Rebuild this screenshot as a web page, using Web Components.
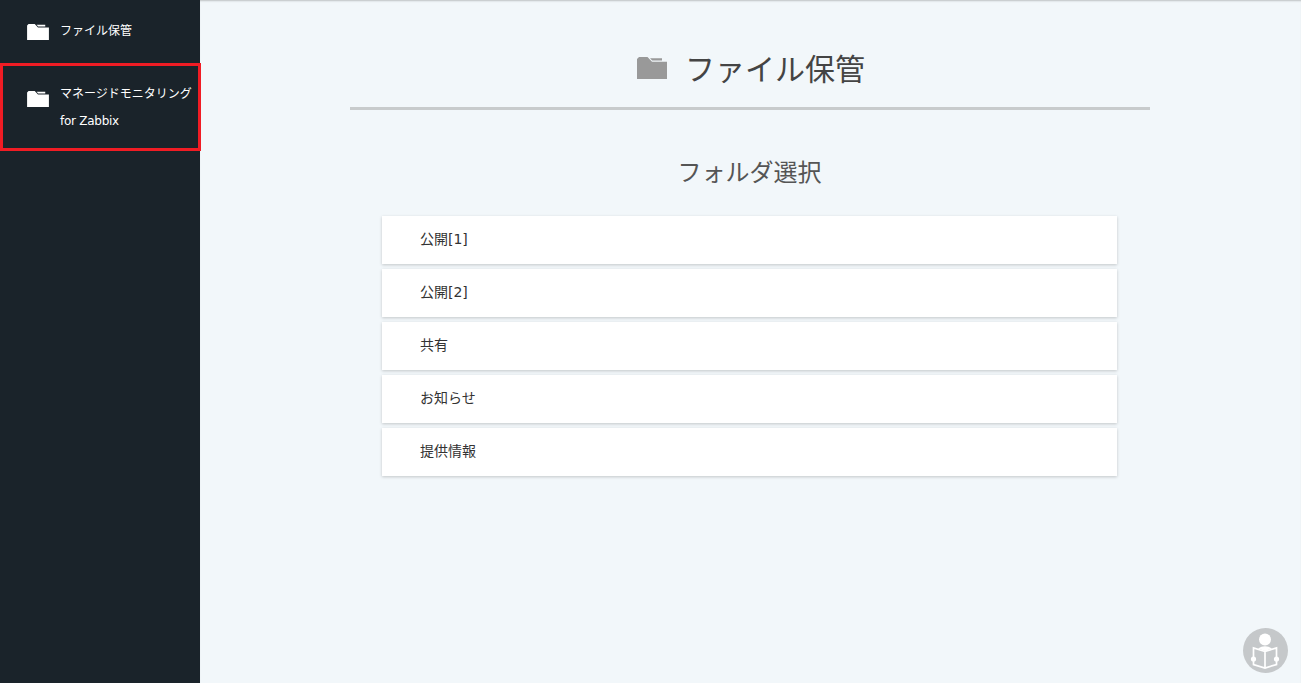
<!DOCTYPE html>
<html lang="ja">
<head>
<meta charset="utf-8">
<title>ファイル保管</title>
<style>
    html, body { margin: 0; height: 100%; overflow: hidden; }
    body { font-family: "DejaVu Sans", "Noto Sans CJK JP", sans-serif; }
</style>
</head>
<body>
<app-shell>
    <side-nav slot="nav">
        <nav-item>ファイル保管</nav-item>
        <nav-item outlined>マネージドモニタリング<br><span style="letter-spacing:-.26px">for Zabbix</span></nav-item>
    </side-nav>
    <page-title>ファイル保管</page-title>
    <folder-list heading="フォルダ選択">
        <folder-row>公開[1]</folder-row>
        <folder-row>公開[2]</folder-row>
        <folder-row>共有</folder-row>
        <folder-row>お知らせ</folder-row>
        <folder-row>提供情報</folder-row>
    </folder-list>
    <help-button></help-button>
</app-shell>

<script>
(function () {
    'use strict';

    const FOLDER = `<svg viewBox="0 0 30 22" width="100%" height="100%" style="display:block" aria-hidden="true">
        <path fill="currentColor" d="M0 22V2L2 0h8.5l4.5 4.7h15V22z"/>
        <path fill="currentColor" d="M13 1.2h12v2.4H15.2z"/>
    </svg>`;

    customElements.define('app-shell', class extends HTMLElement {
        constructor() {
            super();
            this.attachShadow({ mode: 'open' }).innerHTML = `
                <style>
                    :host {
                        display: grid;
                        grid-template-columns: 200px 1fr;
                        height: 683px;
                        background: #f2f7fa;
                        position: relative;
                    }
                    main {
                        display: flex;
                        flex-direction: column;
                        align-items: center;
                        padding-right: 1px;
                        box-shadow: inset 0 2px 2px -1px rgba(0,0,0,.22);
                    }
                </style>
                <slot name="nav"></slot>
                <main><slot></slot></main>
            `;
        }
    });

    customElements.define('side-nav', class extends HTMLElement {
        constructor() {
            super();
            this.attachShadow({ mode: 'open' }).innerHTML = `
                <style>
                    :host {
                        display: flex;
                        flex-direction: column;
                        background: #1a232a;
                        height: 100%;
                    }
                </style>
                <slot></slot>
            `;
        }
    });

    customElements.define('nav-item', class extends HTMLElement {
        constructor() {
            super();
            this.attachShadow({ mode: 'open' }).innerHTML = `
                <style>
                    :host {
                        display: flex;
                        box-sizing: border-box;
                        height: 63px;
                        padding: 17px 0 0 27px;
                        color: #fff;
                        font-size: 12px;
                        line-height: 27px;
                    }
                    :host([outlined]) {
                        width: 201px;
                        height: 88px;
                        border: 3px solid #f01c24;
                        padding: 13px 0 0 24px;
                        position: relative;
                        z-index: 1;
                    }
                    .icon { width: 22px; height: 16px; margin: 7px 11px 0 0; flex: none; }
                    :host([outlined]) .icon { margin-top: 12px; }
                    .label { white-space: nowrap; margin-top: 1px; }
                    :host([outlined]) .label { margin-top: 2px; }
                </style>
                <span class="icon">${FOLDER}</span>
                <span class="label"><slot></slot></span>
            `;
        }
    });

    customElements.define('page-title', class extends HTMLElement {
        constructor() {
            super();
            this.attachShadow({ mode: 'open' }).innerHTML = `
                <style>
                    :host {
                        display: flex;
                        justify-content: center;
                        align-items: center;
                        box-sizing: border-box;
                        width: 800px;
                        height: 110px;
                        margin-bottom: 40px;
                        padding-top: 26px;
                        border-bottom: 3px solid #c8cbcc;
                        color: #444;
                        font-size: 30px;
                    }
                    .icon { width: 30px; height: 22px; margin: 3px 18px 0 2px; color: #999; }
                </style>
                <span class="icon">${FOLDER}</span>
                <span><slot></slot></span>
            `;
        }
    });

    customElements.define('folder-list', class extends HTMLElement {
        constructor() {
            super();
            let shadowRoot = this.attachShadow({ mode: 'open' });
            shadowRoot.innerHTML = `
                <style>
                    :host {
                        display: flex;
                        flex-direction: column;
                        align-items: center;
                        width: 735px;
                        margin-right: 1px;
                    }
                    h2 {
                        margin: 0 0 26px;
                        height: 40px;
                        line-height: 46px;
                        font-size: 24px;
                        font-weight: 400;
                        color: #555;
                    }
                    #rows { display: flex; flex-direction: column; gap: 5px; width: 100%; }
                </style>
                <h2></h2>
                <div id="rows"><slot></slot></div>
            `;
            shadowRoot.querySelector('h2').textContent = this.getAttribute('heading');
        }
    });

    customElements.define('folder-row', class extends HTMLElement {
        constructor() {
            super();
            this.attachShadow({ mode: 'open' }).innerHTML = `
                <style>
                    :host {
                        display: block;
                        box-sizing: border-box;
                        height: 48px;
                        padding-left: 38px;
                        background: #fff;
                        box-shadow: 0 1px 3px rgba(0,0,0,.2);
                        color: #333;
                        font-size: 14px;
                        line-height: 46px;
                    }
                </style>
                <slot></slot>
            `;
        }
    });

    customElements.define('help-button', class extends HTMLElement {
        constructor() {
            super();
            this.attachShadow({ mode: 'open' }).innerHTML = `
                <style>
                    :host {
                        position: absolute;
                        right: 13px;
                        bottom: 10px;
                        width: 45px;
                        height: 45px;
                    }
                </style>
                <svg viewBox="0 0 45 45" width="45" height="45" aria-hidden="true">
                    <circle cx="22.5" cy="22.5" r="22.5" fill="#c5c8ca"/>
                    <circle cx="22" cy="11.5" r="6" fill="#fff"/>
                    <path fill="#fff" d="M15 20.5q7-4.5 14 0l-7 2.5z"/>
                    <path fill="none" stroke="#fff" stroke-width="1.7" d="M22 23.5L10.5 20v16.5L22 40l11.5-3.5V20L22 23.5V40"/>
                    <circle cx="10.5" cy="31" r="2.6" fill="#fff"/>
                    <circle cx="33.5" cy="31" r="2.6" fill="#fff"/>
                </svg>
            `;
        }
    });
})();
</script>
</body>
</html>
